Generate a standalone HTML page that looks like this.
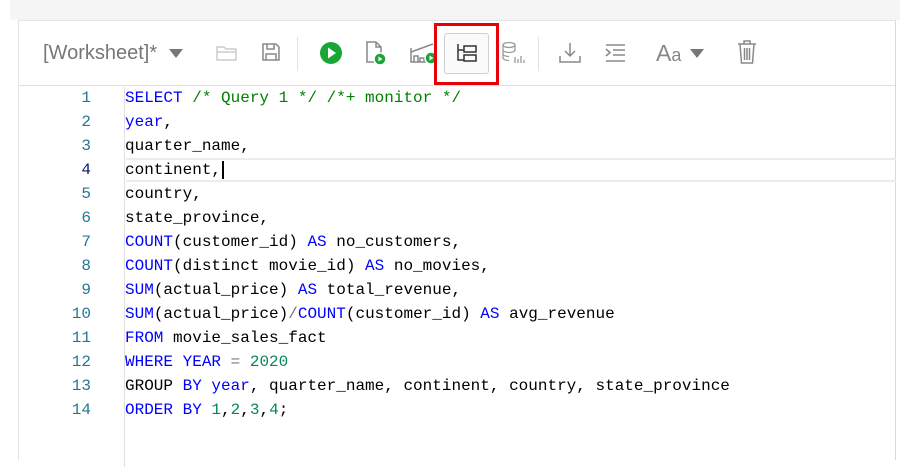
<!DOCTYPE html>
<html><head><meta charset="utf-8"><style>
*{margin:0;padding:0;box-sizing:border-box}
body{width:900px;height:447px;background:#fff;position:relative;overflow:hidden;font-family:"Liberation Sans",sans-serif}
.top{position:absolute;left:10px;top:0;width:890px;height:20px;background:#f5f5f5}
.panel{position:absolute;left:18px;top:20px;width:878px;height:440px;background:#fff;border-left:1px solid #e4e4e4;border-top:1px solid #e4e4e4;border-right:1px solid #d8d8d8}
.tb{position:absolute;left:0;top:0;width:100%;height:65px;border-bottom:1px solid #e0e0e0}
.ws{position:absolute;left:24px;top:21px;font-size:20px;color:#777}
.ic{position:absolute}
.sep{position:absolute;top:16px;width:1px;height:34px;background:#e2e2e2}
.gut{position:absolute;left:0;top:66px;width:106px;height:380px;border-right:1px solid #e0e0e0}
.code{position:absolute;left:0;top:66px;font-family:"Liberation Mono",monospace;font-size:16px}
.ln{position:absolute;width:72px;text-align:right;color:#237893;left:0}
.tx{position:absolute;left:106px;color:#000;white-space:pre}
.k{color:#0000ff}.c{color:#008000}.n{color:#098658}.o{color:#777}
.cur{position:absolute;left:107px;top:71px;width:770px;height:24px;border-top:2px solid #ececec;border-bottom:2px solid #ececec}
</style></head><body>
<div class="top"></div>
<div class="panel">
 <div class="tb">
  <div class="ws">[Worksheet]*</div>
  <svg class="ic" style="left:150px;top:28px" width="14" height="10" viewBox="0 0 14 10"><path d="M0 0h14L7 9z" fill="#777"/></svg>
  <svg class="ic" style="left:197px;top:23px" width="22" height="18" viewBox="0 0 22 18" fill="none" stroke="#ccc" stroke-width="1.5"><path d="M1 3h7l2 2h10v11H1z M1 8h19"/></svg>
  <svg class="ic" style="left:242px;top:21px" width="20" height="20" viewBox="0 0 20 20" fill="none" stroke="#888" stroke-width="1.5"><path d="M2 2h13l3 3v13H2z M6 2v5h7V2 M5 18v-6h10v6"/></svg>
  <div class="sep" style="left:278px"></div>
  <svg class="ic" style="left:300px;top:20px" width="24" height="24" viewBox="0 0 24 24"><circle cx="12" cy="12" r="11" fill="#1aa637"/><path d="M9 6.5l8 5.5-8 5.5z" fill="#fff"/></svg>
  <svg class="ic" style="left:346px;top:19px" width="24" height="26" viewBox="0 0 24 26" fill="none" stroke="#888" stroke-width="1.5"><path d="M2 2h9l5 5v15H2z M11 2v5h5"/><circle cx="15" cy="19" r="6" fill="#1aa637" stroke="#fff" stroke-width="1.5"/><path d="M13.5 16.5l4 2.5-4 2.5z" fill="#fff" stroke="none"/></svg>
  <svg class="ic" style="left:390px;top:21px" width="30" height="24" viewBox="0 0 30 24" fill="none" stroke="#888" stroke-width="1.5"><path d="M2 6v14h20 M5 20v-6h4v6 M11 20v-4h4v4 M2 10l22-8"/><circle cx="22" cy="16" r="6" fill="#1aa637" stroke="#fff" stroke-width="1.5"/><path d="M20.5 13.5l4 2.5-4 2.5z" fill="#fff" stroke="none"/></svg>
  <div style="position:absolute;left:415px;top:2px;width:65px;height:62px;border:3px solid #e8000b"></div>
  <div style="position:absolute;left:425px;top:12px;width:45px;height:41px;border:1px solid #d0d0d0;border-radius:3px;background:#fafafa"></div>
  <svg class="ic" style="left:437px;top:22px" width="22" height="20" viewBox="0 0 22 20" fill="none" stroke="#333" stroke-width="1.5"><path d="M2 1v16h6 M2 7h6"/><rect x="8" y="3" width="12" height="6"/><rect x="8" y="12" width="12" height="6"/></svg>
  <svg class="ic" style="left:482px;top:20px" width="24" height="24" viewBox="0 0 24 24" fill="none" stroke="#999" stroke-width="1.3"><ellipse cx="8" cy="4" rx="6" ry="2.5"/><path d="M2 4v13c0 1.5 3 2.5 6 2.5 M14 4v6 M2 9c0 1.5 3 2.5 6 2.5s6-1 6-2.5 M2 13c0 1.5 3 2.5 6 2.5 M14 22v-6 M17 22v-4 M20 22v-7 M23 22v-3"/></svg>
  <div class="sep" style="left:519px"></div>
  <svg class="ic" style="left:540px;top:21px" width="22" height="22" viewBox="0 0 22 22" fill="none" stroke="#888" stroke-width="1.5"><path d="M11 1v13 M6 9l5 5 5-5 M1 14v6h20v-6"/></svg>
  <svg class="ic" style="left:585px;top:23px" width="22" height="18" viewBox="0 0 22 18" fill="none" stroke="#888" stroke-width="1.5"><path d="M2 1h19 M9 6h12 M9 11h12 M2 17h19 M2 5l4 3.5-4 3.5"/></svg>
  <div style="position:absolute;left:637px;top:19px;font-size:23px;color:#888">A<span style="font-size:18px">a</span></div>
  <svg class="ic" style="left:671px;top:28px" width="14" height="10" viewBox="0 0 14 10"><path d="M0 0h14L7 9z" fill="#777"/></svg>
  <svg class="ic" style="left:718px;top:19px" width="20" height="24" viewBox="0 0 20 24" fill="none" stroke="#888" stroke-width="1.5"><path d="M1 4h18 M7 4V1h6v3 M3 4l1.5 19h11L17 4 M7.5 8v12 M10 8v12 M12.5 8v12"/></svg>
 </div>
 <div class="gut"></div>
 <div class="code">
  <div class="cur"></div>
  <div class="ln" style="top:2px">1</div><div class="tx" style="top:2px"><span class="k">SELECT</span> <span class="c">/* Query 1 */ /*+ monitor */</span></div>
  <div class="ln" style="top:26px">2</div><div class="tx" style="top:26px"><span class="k">year</span>,</div>
  <div class="ln" style="top:50px">3</div><div class="tx" style="top:50px">quarter_name,</div>
  <div class="ln" style="top:74px;color:#0b216f">4</div><div class="tx" style="top:74px">continent,<span style="border-left:2px solid #000;margin-left:1px"></span></div>
  <div class="ln" style="top:98px">5</div><div class="tx" style="top:98px">country,</div>
  <div class="ln" style="top:122px">6</div><div class="tx" style="top:122px">state_province,</div>
  <div class="ln" style="top:146px">7</div><div class="tx" style="top:146px"><span class="k">COUNT</span>(customer_id) <span class="k">AS</span> no_customers,</div>
  <div class="ln" style="top:170px">8</div><div class="tx" style="top:170px"><span class="k">COUNT</span>(distinct movie_id) <span class="k">AS</span> no_movies,</div>
  <div class="ln" style="top:194px">9</div><div class="tx" style="top:194px"><span class="k">SUM</span>(actual_price) <span class="k">AS</span> total_revenue,</div>
  <div class="ln" style="top:218px">10</div><div class="tx" style="top:218px"><span class="k">SUM</span>(actual_price)<span class="o">/</span><span class="k">COUNT</span>(customer_id) <span class="k">AS</span> avg_revenue</div>
  <div class="ln" style="top:242px">11</div><div class="tx" style="top:242px"><span class="k">FROM</span> movie_sales_fact</div>
  <div class="ln" style="top:266px">12</div><div class="tx" style="top:266px"><span class="k">WHERE YEAR</span> <span class="o">=</span> <span class="n">2020</span></div>
  <div class="ln" style="top:290px">13</div><div class="tx" style="top:290px">GROUP <span class="k">BY year</span>, quarter_name, continent, country, state_province</div>
  <div class="ln" style="top:314px">14</div><div class="tx" style="top:314px"><span class="k">ORDER BY</span> <span class="n">1</span>,<span class="n">2</span>,<span class="n">3</span>,<span class="n">4</span>;</div>
 </div>
</div>
</body></html>
